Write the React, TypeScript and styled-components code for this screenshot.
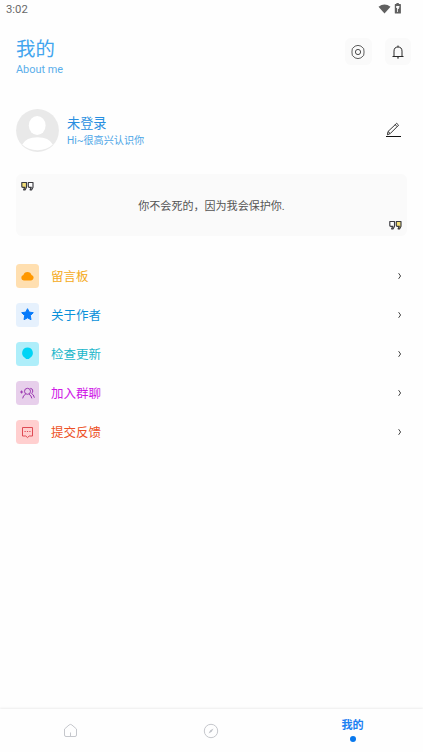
import React from "react";
import styled, { createGlobalStyle } from "styled-components";

const GlobalStyle = createGlobalStyle`
  * { box-sizing: border-box; }
  body { margin: 0; background: #fff; font-family: Roboto, "Noto Sans CJK SC", sans-serif; }
  svg { display: block; flex: none; }
`;

const Screen = styled.div`
  display: flex;
  flex-direction: column;
  height: 752px;
  width: 423px;
  background: #fefefe;
  overflow: hidden;
`;
const StatusBar = styled.div`
  display: flex;
  justify-content: space-between;
  height: 18px;
  padding: 3px 21px 0 6px;
  font-size: 11.3px;
  line-height: 13px;
  color: #686868;
`;
const StatusIcons = styled.div`
  display: flex;
  gap: 3px;
`;
const Header = styled.header`
  display: flex;
  justify-content: space-between;
  height: 91px;
  padding: 20px 12px 0 16px;
`;
const Title = styled.h1`
  margin: 0;
  padding-top: 1px;
  font-size: 19.4px;
  line-height: 22px;
  font-weight: 400;
  color: #42a5ee;
`;
const Subtitle = styled.div`
  margin-top: 2px;
  font-size: 10.9px;
  line-height: 14px;
  color: #5aaeea;
`;
const Actions = styled.div`
  display: flex;
  gap: 13px;
`;
const ActionButton = styled.button`
  display: grid;
  place-items: center;
  width: 26.5px;
  height: 27px;
  padding: 0;
  border: 0;
  border-radius: 6px;
  background: #fafafa;
`;
const Profile = styled.section`
  display: flex;
  height: 65px;
  padding: 0 22px 0 16px;
`;
const ProfileText = styled.div`
  flex: 1;
  padding: 6px 0 0 8px;
`;
const UserName = styled.div`
  font-size: 13.2px;
  line-height: 17px;
  color: #288ee0;
`;
const Greeting = styled.div`
  padding-top: 1px;
  font-size: 10.1px;
  line-height: 15px;
  color: #4ba5e7;
`;
const EditButton = styled.button`
  align-self: flex-start;
  margin-top: 13px;
  padding: 0;
  border: 0;
  background: none;
`;
const QuoteCard = styled.section`
  display: flex;
  flex-direction: column;
  justify-content: space-between;
  height: 62px;
  margin: 0 16px;
  padding: 7px 5px 6px;
  border-radius: 6px;
  background: #fafafa;
`;
const QuoteText = styled.p`
  margin: 0;
  padding-top: 2px;
  text-align: center;
  font-size: 11.05px;
  line-height: 16px;
  color: #555;
`;
const QuoteMark = styled.div<{ $end?: boolean }>`
  align-self: ${(p) => (p.$end ? "flex-end" : "flex-start")};
`;
const Menu = styled.nav`
  display: flex;
  flex: 1;
  flex-direction: column;
  gap: 15.6px;
  padding: 28px 19px 0 16px;
`;
const MenuRow = styled.div`
  display: flex;
  align-items: center;
  height: 23.5px;
`;
const IconTile = styled.div<{ $bg: string }>`
  display: grid;
  place-items: center;
  width: 23px;
  height: 23.5px;
  border-radius: 3.5px;
  background: ${(p) => p.$bg};
`;
const MenuLabel = styled.span<{ $color: string }>`
  flex: 1;
  padding: 2px 0 0 12px;
  font-size: 12.5px;
  line-height: 18px;
  color: ${(p) => p.$color};
`;
const TabBar = styled.nav`
  display: grid;
  grid-template-columns: 140px 142px 141px;
  height: 43px;
  background: #fefefe;
  box-shadow: 0 -1px 2px rgba(0, 0, 0, 0.07);
`;
const Tab = styled.div`
  display: flex;
  flex-direction: column;
  align-items: center;
  padding-top: 14px;
`;
const ActiveTab = styled(Tab)`
  padding-top: 9px;
  font-size: 11.1px;
  line-height: 15px;
  font-weight: 700;
  color: #1b80f2;
`;
const TabDot = styled.span`
  width: 6px;
  height: 6px;
  margin-top: 3px;
  border-radius: 50%;
  background: #0878ed;
`;

const Wifi = () => (
  <svg width="13" height="12" viewBox="0 0 13 12">
    <path d="M.5 3.8Q6.5-.8 12.5 3.8L6.5 10.6Z" fill="#606060" />
  </svg>
);
const Battery = () => (
  <svg width="8" height="12" viewBox="0 0 8 12">
    <path d="M2.4.1h2.4v1h1.6q.5 0 .5.5v8.3q0 .6-.6.6H1.4q-.6 0-.6-.6V1.6q0-.5.5-.5h1.1Z" fill="#606060" />
    <path d="M2.2 3h3.2v1.5H4.8V6h-.9v3h-.8V5h-.9Z" fill="#fff" />
  </svg>
);
const Settings = () => (
  <svg width="16" height="16" viewBox="0 0 16 16" fill="none" stroke="#4c4c4c" strokeWidth=".9">
    <path d="M5.1 2.1Q8 .7 10.9 2.1L13.7 4.6Q14.4 8 13.7 11.4L10.9 13.9Q8 15.3 5.1 13.9L2.3 11.4Q1.6 8 2.3 4.6Z" />
    <circle cx="8" cy="8" r="2.6" strokeWidth="1" />
  </svg>
);
const Bell = () => (
  <svg width="14" height="14" viewBox="0 0 14 14" fill="none" stroke="#292929" strokeWidth="1">
    <path d="M1.5 11.5h11M3 11.3V6.1Q3.1 2 7 2t4 4.1v5.2M7 .5V2M6 12.9h2" />
  </svg>
);
const Avatar = () => (
  <svg width="43" height="43" viewBox="0 0 43 43">
    <circle cx="21.5" cy="21.5" r="21.4" fill="#e9e9e9" />
    <ellipse cx="21.2" cy="16.5" rx="8.4" ry="9.4" fill="#fff" />
    <path d="M6.2 35.5Q10 28.2 21.5 28.2T36.8 35.5Q30.8 41.2 21.5 41.2T6.2 35.5Z" fill="#fff" />
  </svg>
);
const Pencil = () => (
  <svg width="16" height="16" viewBox="0 0 16 16" fill="none" stroke="#353535">
    <path d="M2.4 12.8l.6-3.3 8.7-8.2 1.9 1.9-8.3 8.3ZM10.2 2.7l1.9 1.9M3 9.5l2.2 2" />
    <path d="M1 14.5h15" stroke="#111" />
  </svg>
);
const Quotes = ({ end = false }: { end?: boolean }) => (
  <svg width="13" height="10" viewBox="0 0 13 10" stroke="#3b3b40" strokeWidth="1.15" strokeLinejoin="round">
    <path d="M.8 1.5h4.7v4.8L4.2 8.8H2.6l1.2-2.5h-2q-1 0-1-1Z" fill={end ? "#fff" : "#f3df78"} />
    <path d="M7.3 1.5H12v4.8l-1.3 2.5H9.1l1.2-2.5h-2q-1 0-1-1Z" fill={end ? "#f3df78" : "#fff"} />
  </svg>
);
const Chevron = () => (
  <svg width="10" height="8" viewBox="0 0 10 8" fill="none" stroke="#444">
    <path d="m4.6 1.2 2 2.8-2 2.8" />
  </svg>
);
const Cloud = () => (
  <svg width="15" height="12" viewBox="0 0 15 12" fill="#ff9800">
    <path d="M3.8 10.5A2.8 2.8 0 0 1 3.4 5a4.2 4.2 0 0 1 8.1 0 2.8 2.8 0 0 1-.3 5.5Z" />
  </svg>
);
const Star = () => (
  <svg width="15" height="15" viewBox="0 0 15 15" fill="#087bfa" stroke="#087bfa" strokeLinejoin="round">
    <path d="m7.5 1.7 1.7 3.4 4.1.6-3 2.9.7 4.1-3.5-1.9L4 12.7l.7-4.1-3-2.9 4.1-.6Z" />
  </svg>
);
const Balloon = () => (
  <svg width="13" height="13" viewBox="0 0 13 13" fill="#00d4f5">
    <path d="M6.5.5a5.5 5.5 0 0 0-2.7 10.2L5.2 12h2.6l1.4-1.3A5.5 5.5 0 0 0 6.5.5Z" />
  </svg>
);
const Group = () => (
  <svg width="15" height="12" viewBox="0 0 15 12" fill="none" stroke="#9a36b0" strokeWidth="1">
    <circle cx="7.5" cy="4.3" r="3" />
    <path d="M2.7 11.4q.2-3.1 3-4.2M9 7.2q2.3 1 2.8 4.2M10.3 1.3q2.5.2 2.5 2.7 0 1.5-1.3 2.4 2.2 1 2.9 4.3M.1 5h3M1.6 3.5v3" />
  </svg>
);
const Message = () => (
  <svg width="13" height="13" viewBox="0 0 13 13" fill="none" stroke="#df4b54">
    <path d="M1.5 1.5h10v8.5H8.2L6.5 11.6 4.8 10H1.5Z" />
    <path d="M3.5 5.5h1.2M5.9 5.5h1.2M8.3 5.5h1.2" strokeWidth="1.2" />
  </svg>
);
const Home = () => (
  <svg width="15" height="15" viewBox="0 0 15 15" fill="none" stroke="#c5c7cc">
    <path d="M1.5 6 6.2 1.9q1.3-1 2.6 0L13.5 6v6q0 1.5-1.5 1.5H3q-1.5 0-1.5-1.5ZM7.5 9.5v4" />
  </svg>
);
const Compass = () => (
  <svg width="16" height="16" viewBox="0 0 16 16" fill="none" stroke="#c5c7cc">
    <circle cx="8" cy="8" r="6.7" />
    <path d="m10.5 5.5-1.8 3.2-3.2 1.8 1.8-3.2Z" fill="#c0c3c9" stroke="none" />
  </svg>
);

const items = [
  { label: "留言板", color: "#f5aa20", bg: "#ffdfb0", icon: <Cloud /> },
  { label: "关于作者", color: "#0b91da", bg: "#e6f1fd", icon: <Star /> },
  { label: "检查更新", color: "#20b6ca", bg: "#aeeefa", icon: <Balloon /> },
  { label: "加入群聊", color: "#cf17e6", bg: "#e7cfeb", icon: <Group /> },
  { label: "提交反馈", color: "#ed5024", bg: "#ffcfcf", icon: <Message /> },
];

export default function App() {
  return (
    <>
      <GlobalStyle />
      <Screen lang="zh-CN">
        <StatusBar>
          <span>3:02</span>
          <StatusIcons><Wifi /><Battery /></StatusIcons>
        </StatusBar>
        <Header>
          <div>
            <Title>我的</Title>
            <Subtitle>About me</Subtitle>
          </div>
          <Actions>
            <ActionButton aria-label="设置"><Settings /></ActionButton>
            <ActionButton aria-label="通知"><Bell /></ActionButton>
          </Actions>
        </Header>
        <Profile>
          <Avatar />
          <ProfileText>
            <UserName>未登录</UserName>
            <Greeting>Hi~很高兴认识你</Greeting>
          </ProfileText>
          <EditButton aria-label="编辑"><Pencil /></EditButton>
        </Profile>
        <QuoteCard>
          <QuoteMark><Quotes /></QuoteMark>
          <QuoteText>你不会死的，因为我会保护你.</QuoteText>
          <QuoteMark $end><Quotes end /></QuoteMark>
        </QuoteCard>
        <Menu>
          {items.map((item) => (
            <MenuRow key={item.label}>
              <IconTile $bg={item.bg}>{item.icon}</IconTile>
              <MenuLabel $color={item.color}>{item.label}</MenuLabel>
              <Chevron />
            </MenuRow>
          ))}
        </Menu>
        <TabBar>
          <Tab><Home /></Tab>
          <Tab><Compass /></Tab>
          <ActiveTab>我的<TabDot /></ActiveTab>
        </TabBar>
      </Screen>
    </>
  );
}
